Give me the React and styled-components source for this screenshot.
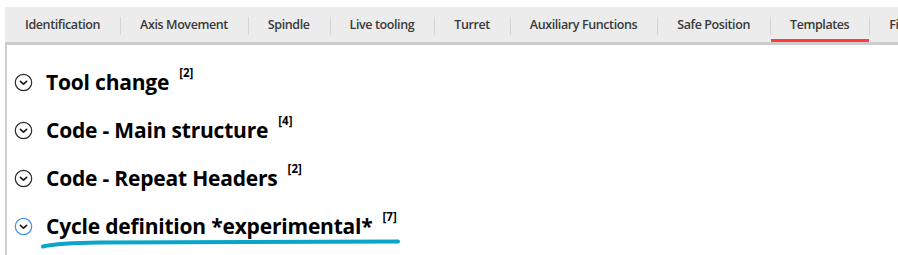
import React from "react";
import styled, { createGlobalStyle } from "styled-components";

const tabs = [
  "Identification",
  "Axis Movement",
  "Spindle",
  "Live tooling",
  "Turret",
  "Auxiliary Functions",
  "Safe Position",
  "Templates",
  "Fixtures",
];

const sections = [
  { title: "Tool change", count: 2 },
  { title: "Code - Main structure", count: 4 },
  { title: "Code - Repeat Headers", count: 2 },
  { title: "Cycle definition *experimental*", count: 7, focused: true },
];

const GlobalStyle = createGlobalStyle`
  html, body {
    margin: 0;
    padding: 0;
    background: #ffffff;
    overflow: hidden;
  }
  body {
    font-family: "Open Sans", "Noto Sans", sans-serif;
  }
`;

const ChevronCircle = ({ focused }) => (
  <svg width="19" height="19" viewBox="0 0 19 19">
    <circle
      cx="9.5"
      cy="9.5"
      r="8.2"
      fill="none"
      stroke={focused ? "#4a8fe8" : "#2a2a2a"}
      strokeWidth="1.2"
    />
    <path
      d="M6.4 8.3 L9.5 11.2 L12.6 8.3"
      fill="none"
      stroke="#1a1a1a"
      strokeWidth="1.6"
      strokeLinecap="round"
      strokeLinejoin="round"
    />
  </svg>
);

const App = () => {
  return (
    <>
      <GlobalStyle />
      <Page>
        <TabBar>
          {tabs.map((t, i) => (
            <Tab key={t} $first={i === 0} $active={t === "Templates"}>
              {t}
            </Tab>
          ))}
        </TabBar>
        <Content>
          {sections.map((s) => (
            <Section key={s.title}>
              <ChevronCircle focused={s.focused} />
              <Heading>
                {s.title}
                {s.focused && (
                  <Scribble viewBox="0 0 362 12" preserveAspectRatio="none">
                    <path
                      d="M3 9.5 C 14 7, 30 6, 60 5.6 L 358 4.4"
                      fill="none"
                      stroke="#0aa5c8"
                      strokeWidth="4"
                      strokeLinecap="round"
                    />
                  </Scribble>
                )}
              </Heading>
              <Count>[{s.count}]</Count>
            </Section>
          ))}
        </Content>
      </Page>
    </>
  );
};

export default App;

const Page = styled.div`
  width: 898px;
  height: 255px;
  padding-top: 7px;
  padding-left: 5px;
  box-sizing: border-box;
  overflow: hidden;
`;

const TabBar = styled.div`
  display: flex;
  flex-flow: row nowrap;
  height: 35px;
  background-color: #ececec;
  border-bottom: 3px solid #cccccc;
  overflow: hidden;
  white-space: nowrap;
`;

const Tab = styled.div`
  position: relative;
  display: flex;
  align-items: center;
  flex-shrink: 0;
  padding: 0 20px;
  height: 100%;
  font-size: 12.5px;
  font-weight: 600;
  color: #3a3a3a;
  letter-spacing: -0.4px;
  &::before {
    content: "";
    display: ${(p) => (p.$first ? "none" : "block")};
    position: absolute;
    left: 0;
    top: 10px;
    bottom: 7px;
    width: 1px;
    background: #d4d4d4;
  }
  &::after {
    content: "";
    display: ${(p) => (p.$active ? "block" : "none")};
    position: absolute;
    left: 1px;
    right: 0;
    bottom: -1px;
    height: 4px;
    background: #ff3b3b;
  }
`;

const Content = styled.div`
  border-left: 2px solid #d0d0d0;
  height: 210px;
  padding: 22px 0 0 7px;
  display: flex;
  flex-direction: column;
  gap: 18px;
`;

const Section = styled.div`
  display: flex;
  align-items: center;
  height: 30px;
`;

const Heading = styled.span`
  position: relative;
  margin-left: 13px;
  font-size: 21px;
  font-weight: 700;
  color: #000;
  letter-spacing: -0.2px;
`;

const Count = styled.sup`
  align-self: flex-start;
  margin-left: 10px;
  margin-top: -2px;
  font-size: 11.5px;
  font-weight: 700;
  color: #000;
`;

const Scribble = styled.svg`
  position: absolute;
  left: -6px;
  top: 25px;
  width: 362px;
  height: 12px;
  overflow: visible;
`;
